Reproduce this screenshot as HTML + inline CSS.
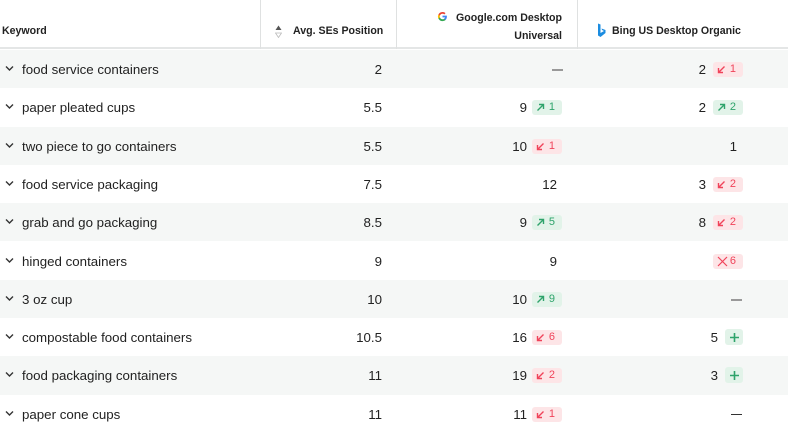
<!DOCTYPE html>
<html><head><style>
*{margin:0;padding:0;box-sizing:border-box}
body{width:788px;height:431px;overflow:hidden;background:#fff;font-family:"Liberation Sans",sans-serif;color:#222;position:relative}
.hdr{position:absolute;left:0;top:0;width:788px;height:49px;border-bottom:2px solid #e4e6e6;font-weight:bold;font-size:10.6px;color:#222}
.vl{position:absolute;top:0;height:49px;width:1px;background:#dfe1e1}
.t{position:absolute;white-space:nowrap}
.row{position:absolute;left:0;width:788px;height:38.3px;font-size:13.3px}
.g{background:#f5f7f6}
.kw{position:absolute;left:22px;top:12px;color:#222}
.chev{position:absolute;left:5px;top:15px}
.num{position:absolute;top:12px;text-align:right;width:60px}
.b{position:absolute;top:12px;width:30px;height:15px;border-radius:3px;font-size:11px;line-height:15px}
.up{background:#e2f3e9;color:#2ea36b}
.dn{background:#fde5e7;color:#f0435a}
.b svg{position:absolute;left:4px;top:3px}
.b span{position:absolute;right:7px;top:0}
.dash{position:absolute;top:19px;height:2px;width:11px;background:#999}
</style></head><body>
<div class="hdr">
<div class="t" style="left:2px;top:25px">Keyword</div>
<div class="vl" style="left:260px"></div>
<svg class="t" style="left:275px;top:25px" width="7" height="13"><path d="M0.5 5 L3.5 0.5 L6.5 5Z" fill="#555"/><path d="M0.5 8 L3.5 12.5 L6.5 8Z" fill="none" stroke="#bbb" stroke-width="0.8"/></svg>
<div class="t" style="left:293px;top:25px">Avg. SEs Position</div>
<div class="vl" style="left:396px"></div>
<div class="t" style="left:437px;top:9px;width:125px;text-align:right;line-height:18px">Google.com Desktop<br>Universal</div>
<svg class="t" style="left:437px;top:11px" width="11" height="11" viewBox="0 0 24 24"><path d="M21.6 12.2c0-.7-.1-1.4-.2-2H12v3.8h5.4a4.6 4.6 0 0 1-2 3v2.5h3.2c1.9-1.7 3-4.3 3-7.3z" fill="#4285F4"/><path d="M12 22c2.7 0 5-.9 6.6-2.4l-3.2-2.5c-.9.6-2 1-3.4 1-2.6 0-4.8-1.8-5.6-4.1H3.1v2.6A10 10 0 0 0 12 22z" fill="#34A853"/><path d="M6.4 14a6 6 0 0 1 0-3.9V7.5H3.1a10 10 0 0 0 0 9z" fill="#FBBC05"/><path d="M12 6c1.5 0 2.8.5 3.8 1.5l2.8-2.8A10 10 0 0 0 3.1 7.5l3.3 2.6C7.2 7.8 9.4 6 12 6z" fill="#EA4335"/></svg>
<div class="vl" style="left:577px"></div>
<svg class="t" style="left:597px;top:23px" width="9" height="15" viewBox="0 0 9 15"><path d="M1 0.5 L3.5 1.5 V10 L7 8 L5 7 L4.5 5.5 L8.5 7 V10 L3.5 14 L1 12.5Z" fill="#1b8ce0"/></svg>
<div class="t" style="left:612px;top:25px">Bing US Desktop Organic</div>
</div>

<div id="rows"></div>
<script>
var data=[
["food service containers","2",["-"],["2","dn","1"]],
["paper pleated cups","5.5",["9","up","1"],["2","up","2"]],
["two piece to go containers","5.5",["10","dn","1"],["1c"]],
["food service packaging","7.5",["12c"],["3","dn","2"]],
["grab and go packaging","8.5",["9","up","5"],["8","dn","2"]],
["hinged containers","9",["9c"],["x","x","6"]],
["3 oz cup","10",["10","up","9"],["-"]],
["compostable food containers","10.5",["16","dn","6"],["5","plus"]],
["food packaging containers","11",["19","dn","2"],["3","plus"]],
["paper cone cups","11",["11","dn","1"],["-k"]]];
var upI='<svg width="9" height="9"><path d="M1.5 7.5 L7.5 1.5 M3 1.5 H7.5 V6" stroke="currentColor" stroke-width="1.4" fill="none"/></svg>';
var dnI='<svg width="9" height="9"><path d="M7.5 1.5 L1.5 7.5 M1.5 3 V7.5 H6" stroke="currentColor" stroke-width="1.4" fill="none"/></svg>';
var xI='<svg width="11" height="11" style="left:4px;top:2px"><path d="M1 1 L10 10 M10 1 L1 10" stroke="currentColor" stroke-width="1.2"/></svg>';
function cell(c,numR,badgeL,plainR,dashL){
 var h='';
 if(c[0]=='-'||c[0]=='-k'){return '<div class="dash" style="left:'+dashL+'px;'+(c[0]=='-k'?'background:#333;height:1.3px':'')+'"></div>';}
 if(c[0].slice(-1)=='c'){return '<div class="num" style="left:'+(plainR-60)+'px">'+c[0].slice(0,-1)+'</div>';}
 if(c[1]=='plus'){h+='<div class="num" style="left:'+(718-60)+'px">'+c[0]+'</div>';
  h+='<div class="b up" style="left:725px;width:18px;height:16px;top:11px"><svg width="11" height="11" style="left:3.5px;top:2.5px"><path d="M5.5 1V10M1 5.5H10" stroke="currentColor" stroke-width="1.6"/></svg></div>';return h;}
 if(c[0]!='x')h+='<div class="num" style="left:'+(numR-60)+'px">'+c[0]+'</div>';
 var cls=c[1]=='up'?'up':'dn';
 var ic=c[1]=='up'?upI:(c[1]=='x'?xI:dnI);
 h+='<div class="b '+cls+'" style="left:'+badgeL+'px">'+ic+'<span>'+c[2]+'</span></div>';
 return h;
}
var out='';
data.forEach(function(d,i){
 var top=50+i*38.3;
 out+='<div class="row'+(i%2==0?' g':'')+'" style="top:'+top+'px">';
 out+='<svg class="chev" width="9" height="7"><path d="M1 1.5 L4.5 5 L8 1.5" stroke="#333" stroke-width="1.4" fill="none"/></svg>';
 out+='<div class="kw">'+d[0]+'</div>';
 out+='<div class="num" style="left:322px">'+d[1]+'</div>';
 out+=cell(d[2],527,532,557,552);
 out+=cell(d[3],706,713,737,731);
 out+='</div>';
});
document.getElementById('rows').innerHTML=out;
</script>
</body></html>
